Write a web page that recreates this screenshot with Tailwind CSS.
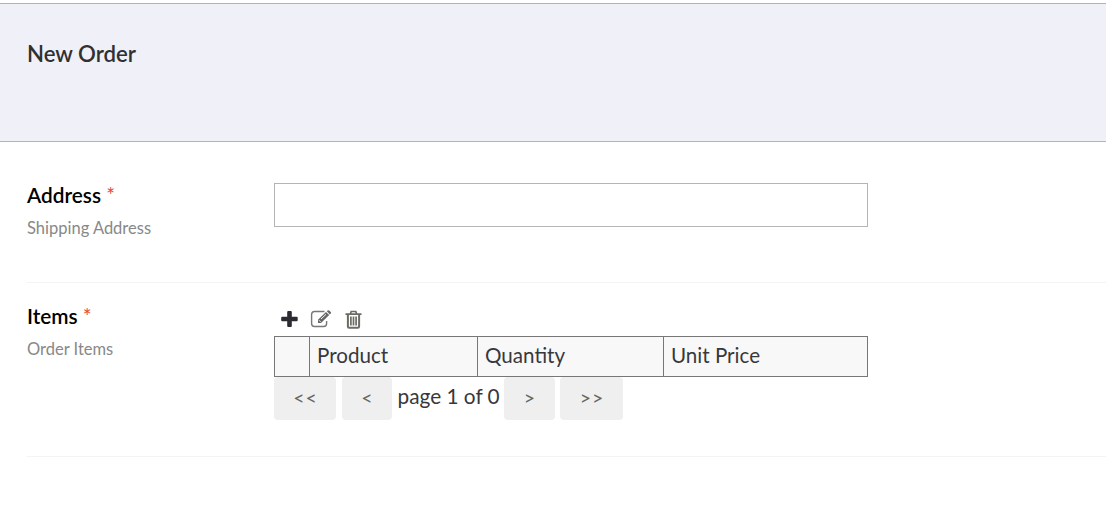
<!DOCTYPE html>
<html lang="en">
<head>
<meta charset="utf-8">
<title>New Order</title>
<script src="https://cdn.jsdelivr.net/npm/@tailwindcss/browser@4"></script>
</head>
<body class="bg-white font-['Lato',sans-serif] text-[#38383c] overflow-hidden">
<header class="mt-[3px] h-[139px] border-y border-[#b3b3b3] bg-[#f0f0f8] pl-[27px] pt-9">
  <h1 class="text-[22.2px] leading-7 font-semibold text-[#303033]">New Order</h1>
</header>
<main class="pl-[27px]">
  <section class="flex h-[141px] border-b border-[#f4f4f4] pt-[41px]">
    <div class="w-[247px]">
      <label for="address" class="block text-[20.8px] leading-6 font-semibold text-black">Address <span class="font-normal text-[#e84a3c]">*</span></label>
      <p class="mt-[9px] text-[16.5px] leading-6 text-[#888]">Shipping Address</p>
    </div>
    <input id="address" class="h-11 w-[594px] border border-[#b5b5b5] bg-white px-2">
  </section>
  <section class="flex h-[174px] border-b border-[#f4f4f4] pt-[21px]">
    <div class="w-[247px]">
      <div class="text-[20.8px] leading-6 font-semibold text-black">Items <span class="font-normal text-[#e84a3c]">*</span></div>
      <p class="mt-[9px] text-[16.5px] leading-6 text-[#888]">Order Items</p>
    </div>
    <div class="w-[594px]">
      <div class="flex h-8 items-center pb-[2px] pl-[7px]">
        <svg class="h-[18px] w-[17px]" viewBox="0 0 17 18"><path fill="#2b2b33" d="M6.200 2Q6.200 1 7.200 1h2.600q1 0 1 1v4.700H15.700q1 0 1 1v2.600q0 1-1 1H10.800v4.700q0 1-1 1H7.200q-1 0-1-1v-4.700H1.200q-1 0-1-1V7.700q0-1 1-1h5z"/></svg>
        <svg class="ml-3 h-[18px] w-[22px]" viewBox="0 0 22 18" fill="none"><path stroke="#777" stroke-width="1.400" d="M14.500 1.500H4.500Q1.600 1.500 1.600 4.400v9.200q0 2.900 2.900 2.900h9.200q2.900 0 2.900-2.900V11"/><path fill="#666" d="M8 9.800 16 2l3.200 3-8.200 8H8zM16.800 1.300l.8-.8q.8-.7 1.600 0l1.500 1.500q.8.800 0 1.600l-.8.800z"/><path stroke="#fff" stroke-width=".9" d="m11 9 5-4.700M9 10.200l1.700 1.700"/></svg>
        <svg class="ml-[13px] h-[19px] w-[17px]" viewBox="0 0 17 19" fill="none" stroke="#6b6b66"><path stroke-width="1.700" d="M.5 4.200h16M5.300 4l.9-2.500h4.600l.9 2.500"/><path stroke-width="2" d="M2.900 4.500v12q0 1.300 1.300 1.300h8.600q1.300 0 1.300-1.300v-12"/><path stroke-width="1.700" d="M5.900 6.500v9M8.500 6.500v9M11.100 6.500v9"/></svg>
      </div>
      <table class="h-[41px] w-[594px] table-fixed border-collapse text-left text-[20.6px] leading-6 [&_th]:border [&_th]:border-[#777] [&_th]:bg-[#f8f8f8] [&_th]:p-0 [&_th]:pb-[3px] [&_th]:pl-[7px] [&_th]:font-normal">
        <colgroup><col class="w-[35px]"><col class="w-[168px]"><col class="w-[186px]"><col></colgroup>
        <thead><tr class="h-10"><th></th><th>Product</th><th>Quantity</th><th>Unit Price</th></tr></thead>
      </table>
      <div class="flex text-[20.8px]">
        <button class="h-[43px] w-[62px] rounded-[4px] bg-[#efefef] pb-px pl-px text-[19.5px] tracking-[1px] text-[#666]">&lt;&lt;</button>
        <button class="ml-1.5 h-[43px] w-[50px] rounded-[4px] bg-[#efefef] pb-px text-[19.5px] text-[#666]">&lt;</button>
        <span class="w-28 pl-[5.5px] pt-[7px] leading-6 whitespace-nowrap">page 1 of 0</span>
        <button class="h-[43px] w-[51px] rounded-[4px] bg-[#efefef] pb-px text-[19.5px] text-[#666]">&gt;</button>
        <button class="ml-[5px] h-[43px] w-[63px] rounded-[4px] bg-[#efefef] pb-px pl-px text-[19.5px] tracking-[1px] text-[#666]">&gt;&gt;</button>
      </div>
    </div>
  </section>
</main>
</body>
</html>
